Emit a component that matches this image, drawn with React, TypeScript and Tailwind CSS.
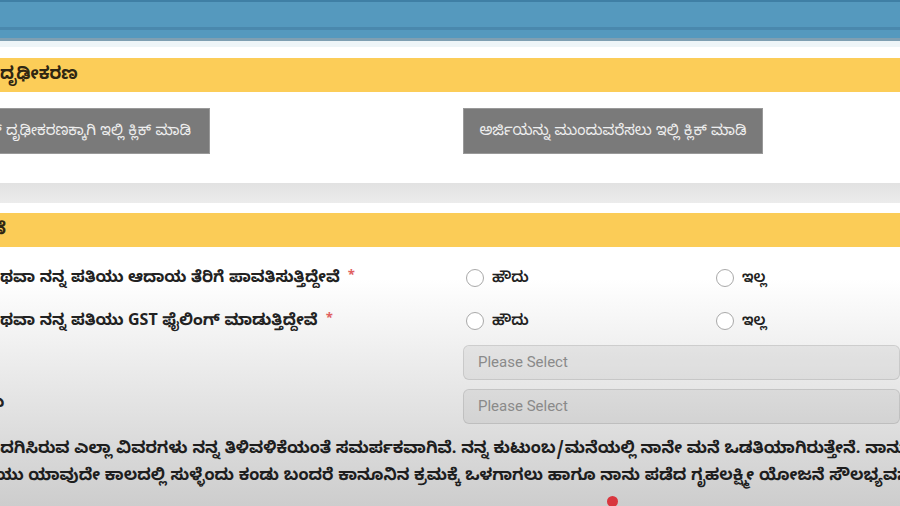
import React from 'react';

const kn = { fontFamily: '"Noto Sans Kannada", "Noto Sans", "Lohit Kannada", sans-serif' };

const Radio = ({ label }: { label: string }) => (
  <label className="flex items-center gap-2">
    <span className="w-[18px] h-[18px] rounded-full border border-[#a9a9a9] bg-white" />
    <span className="text-[15px] font-semibold text-[#222] pt-[6px]" style={kn}>{label}</span>
  </label>
);

const SelectBox = () => (
  <div className="h-[35px] w-[460px] rounded-md border border-black/10 bg-black/[0.05] flex items-center px-[14px]">
    <span className="text-[15px] text-[#8a8a8a]" style={{ fontFamily: 'Roboto, "Liberation Sans", sans-serif' }}>Please Select</span>
  </div>
);

const Star = () => <span className="text-[#e06060] text-[13px] ml-[8px] relative -top-[3px]">*</span>;

export default function App() {
  return (
    <div className="w-[900px] h-[506px] overflow-hidden bg-white relative">
      {/* top bar */}
      <div className="h-[41px] bg-[#5599be] border-t-2 border-[#3f7fa5] border-b-[3px] border-b-[#7f9fb2] flex flex-col">
        <div className="h-[25px]" />
        <div className="h-[3px] bg-[#4a88ad]" />
      </div>
      <div className="h-[6px] bg-[#eef5f8]" />

      {/* card 1 */}
      <div className="bg-white h-[136px] pt-[11px]">
        <div className="h-[34px] bg-[#fccd58] flex items-center overflow-hidden pt-[3px]">
          <span className="text-[17px] font-bold text-[#2f2612] whitespace-nowrap" style={kn}>ದೃಢೀಕರಣ</span>
        </div>
        <div className="flex mt-[16px]">
          <div className="w-[463px] shrink-0">
            <div className="ml-[-200px] w-[410px] h-[46px] bg-[#7a7a7a] border border-[#999] flex items-center justify-end pr-[18px] pt-[4px]">
              <span className="text-[15px] text-[#eeeeee] whitespace-nowrap" style={kn}>ಆಧಾರ್ ದೃಢೀಕರಣಕ್ಕಾಗಿ ಇಲ್ಲಿ ಕ್ಲಿಕ್ ಮಾಡಿ</span>
            </div>
          </div>
          <div className="w-[300px] h-[46px] bg-[#7a7a7a] border border-[#999] flex items-center justify-center pt-[4px]">
            <span className="text-[15px] text-[#eeeeee] whitespace-nowrap" style={kn}>ಅರ್ಜಿಯನ್ನು ಮುಂದುವರೆಸಲು ಇಲ್ಲಿ ಕ್ಲಿಕ್ ಮಾಡಿ</span>
          </div>
        </div>
      </div>

      <div className="h-[20px] bg-gradient-to-b from-[#e2e2e2] to-[#ececec]" />

      {/* card 2 */}
      <div className="h-[303px] pt-[10px] bg-gradient-to-b from-white from-25% to-[#cdcdcd]">
        <div className="h-[34px] bg-[#fbcc57] flex items-center overflow-hidden pt-[3px]">
          <span className="text-[17px] font-bold text-[#2f2612] whitespace-nowrap ml-[-66px]" style={kn}>ಘೋಷಣೆ</span>
        </div>

        <div className="flex items-center h-[43px] mt-[9px]">
          <div className="w-[463px] shrink-0 overflow-hidden">
            <span className="text-[16px] font-bold text-[#222] whitespace-nowrap" style={kn}>ಥವಾ ನನ್ನ ಪತಿಯು ಆದಾಯ ತೆರಿಗೆ ಪಾವತಿಸುತ್ತಿದ್ದೇವೆ<Star /></span>
          </div>
          <div className="w-[250px] pl-[3px]"><Radio label="ಹೌದು" /></div>
          <div className="pl-[3px]"><Radio label="ಇಲ್ಲ" /></div>
        </div>
        <div className="flex items-center h-[43px]">
          <div className="w-[463px] shrink-0 overflow-hidden">
            <span className="text-[16px] font-bold text-[#222] whitespace-nowrap" style={kn}>ಥವಾ ನನ್ನ ಪತಿಯು GST ಫೈಲಿಂಗ್ ಮಾಡುತ್ತಿದ್ದೇವೆ<Star /></span>
          </div>
          <div className="w-[250px] pl-[3px]"><Radio label="ಹೌದು" /></div>
          <div className="pl-[3px]"><Radio label="ಇಲ್ಲ" /></div>
        </div>

        <div className="flex items-center mt-[3px]">
          <div className="w-[463px] shrink-0" />
          <SelectBox />
        </div>
        <div className="flex items-center mt-[9px] h-[35px]">
          <div className="w-[463px] shrink-0 overflow-hidden relative -top-[4px]">
            <span className="text-[16px] font-bold text-[#222] whitespace-nowrap ml-[-58px]" style={kn}>ತಾಲ್ಲೂಕು</span>
          </div>
          <SelectBox />
        </div>

        <div className="mt-[14px] text-[16.5px] font-bold text-[#1e1e1e] leading-[27px]" style={kn}>
          <div className="whitespace-nowrap ml-[-14px]">ಒದಗಿಸಿರುವ ಎಲ್ಲಾ ವಿವರಗಳು ನನ್ನ ತಿಳಿವಳಿಕೆಯಂತೆ ಸಮರ್ಪಕವಾಗಿವೆ. ನನ್ನ ಕುಟುಂಬ/ಮನೆಯಲ್ಲಿ ನಾನೇ ಮನೆ ಒಡತಿಯಾಗಿರುತ್ತೇನೆ. ನಾನು ಒದಗಿಸಿರುವ</div>
          <div className="whitespace-nowrap ml-[-59px]">ಮಾಹಿತಿಯು ಯಾವುದೇ ಕಾಲದಲ್ಲಿ ಸುಳ್ಳೆಂದು ಕಂಡು ಬಂದರೆ ಕಾನೂನಿನ ಕ್ರಮಕ್ಕೆ ಒಳಗಾಗಲು ಹಾಗೂ ನಾನು ಪಡೆದ ಗೃಹಲಕ್ಷ್ಮೀ ಯೋಜನೆ ಸೌಲಭ್ಯವನ್ನು ಹಿಂತಿರುಗಿಸಲು</div>
        </div>
      </div>

      {/* mouse pointer dot */}
      <div className="absolute left-[607px] top-[496px] w-[11px] h-[11px] rounded-full bg-[#d9363e]" />
    </div>
  );
}
